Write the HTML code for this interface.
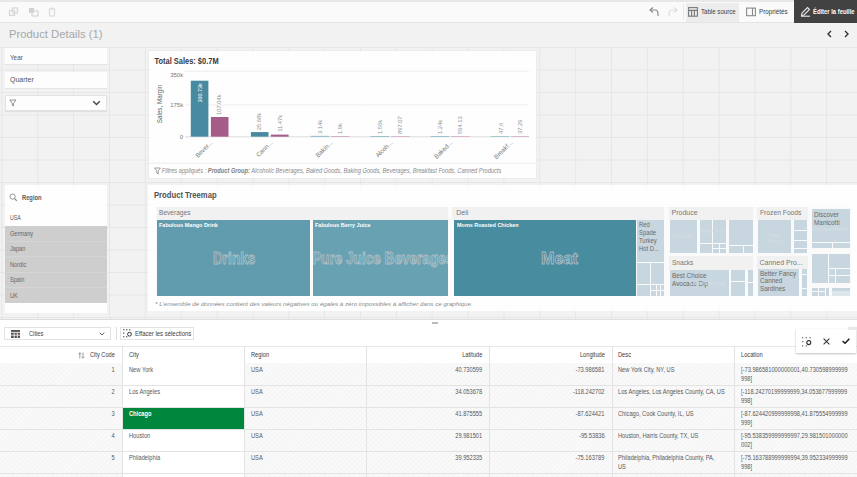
<!DOCTYPE html>
<html><head><meta charset="utf-8">
<style>
*{box-sizing:border-box;margin:0;padding:0}
html,body{width:857px;height:477px;overflow:hidden}
body{position:relative;background:#f2f2f2;font-family:"Liberation Sans",sans-serif;color:#595959}
.a{position:absolute}
.t{position:absolute;white-space:nowrap;line-height:1}
.b{font-weight:bold}
#grid{left:0;top:47px;width:857px;height:272px;
 background-image:linear-gradient(to right, #e6e6e6 1px, transparent 1px),linear-gradient(to bottom, #e6e6e6 1px, transparent 1px);
 background-size:35.87px 22.5px;background-position:1.4px 0px}
.panel{position:absolute;background:rgba(255,255,255,0.88)}
.fp{position:absolute;background:rgba(255,255,255,0.85);box-shadow:0 1px 0 #e3e3e3}
.tm{position:absolute}
.tc{position:absolute;background:#c8d6df}
.tl{position:absolute;background:#c6d5de;border:1px solid #dbe4ea}
</style></head><body>
<!-- top bar -->
<div class="a" style="left:0;top:0;width:857px;height:2px;background:#e8e8e8"></div>
<div class="a" style="left:0;top:2px;width:857px;height:21px;background:#fafafa;border-bottom:1px solid #e4e4e4"></div>
<svg class="a" style="left:8px;top:7px" width="52" height="10" viewBox="0 0 52 10">
 <g fill="none" stroke="#d6d6d6" stroke-width="1.2">
  <rect x="1.5" y="3.5" width="5" height="5"/><rect x="4.5" y="1" width="5" height="5"/>
 </g>
 <rect x="21" y="1" width="5" height="5" fill="#d0d0d0"/><rect x="24" y="4" width="6" height="5" fill="none" stroke="#d6d6d6" stroke-width="1.2"/>
 <rect x="41.5" y="2" width="5" height="7" fill="none" stroke="#dcdcdc" stroke-width="1.2"/><rect x="43" y="0.5" width="2" height="2" fill="#dcdcdc"/>
</svg>
<svg class="a" style="left:648px;top:6px" width="32" height="12" viewBox="0 0 32 12">
 <path d="M3 4 H7 Q10 4 10 8 V10" fill="none" stroke="#8a8a8a" stroke-width="1.2"/><path d="M5 1.5 L2 4 L5 6.5" fill="none" stroke="#8a8a8a" stroke-width="1.2"/>
 <path d="M28 4 H24 Q21 4 21 8 V10" fill="none" stroke="#dedede" stroke-width="1.2"/><path d="M26 1.5 L29 4 L26 6.5" fill="none" stroke="#dedede" stroke-width="1.2"/>
</svg>
<div class="a" style="left:683px;top:4px;width:1px;height:16px;background:#e6e6e6"></div>
<div class="a" style="left:686px;top:3px;width:53px;height:19px;background:#ececec"></div>
<svg class="a" style="left:688px;top:7px" width="10" height="10" viewBox="0 0 10 10"><g fill="none" stroke="#7a7a7a" stroke-width="1.1"><rect x="0.6" y="0.6" width="8.8" height="8.6"/><path d="M0.6 3.4H9.4M3.6 3.4V9.2M6.4 3.4V9.2"/></g></svg>
<div class="t" style="left:701px;top:8px;font-size:7px;color:#404040;transform:scaleX(0.874);transform-origin:0 0">Table source</div>
<svg class="a" style="left:746px;top:7px" width="10" height="10" viewBox="0 0 10 10"><g fill="none" stroke="#8a8a8a" stroke-width="1.1"><rect x="0.6" y="1.1" width="8.8" height="7.6"/><path d="M6.5 1.1V8.7"/></g></svg>
<div class="t" style="left:759.4px;top:8px;font-size:7px;color:#404040;transform:scaleX(0.896);transform-origin:0 0">Propriétés</div>
<div class="a" style="left:794px;top:0;width:63px;height:23px;background:#424242"></div>
<svg class="a" style="left:800px;top:6px" width="11" height="11" viewBox="0 0 11 11"><g fill="none" stroke="#e8e8e8" stroke-width="1.1"><path d="M1.5 9.5 L2 7 L7.5 1.5 L9.5 3.5 L4 9 Z"/><path d="M1 10.2H10"/></g></svg>
<div class="t b" style="left:813px;top:8px;font-size:7px;color:#fff;transform:scaleX(0.835);transform-origin:0 0">Éditer la feuille</div>

<div class="t" style="left:9px;top:29px;font-size:11.3px;color:#a8a8a8">Product Details (1)</div>
<svg class="a" style="left:826px;top:30px" width="26" height="8" viewBox="0 0 26 8"><g fill="none" stroke="#333" stroke-width="1.4"><path d="M5 1 L2 4 L5 7"/><path d="M19 1 L22 4 L19 7"/></g></svg>

<div class="a" id="grid"></div>

<!-- filter panes -->
<div class="fp" style="left:5px;top:48px;width:102px;height:16px"></div>
<div class="t" style="left:9.6px;top:53.5px;font-size:7px;color:#555;transform:scaleX(0.9);transform-origin:0 0">Year</div>
<div class="fp" style="left:5px;top:72px;width:102px;height:16px"></div>
<div class="t" style="left:10px;top:76px;font-size:7px;color:#555">Quarter</div>
<div class="fp" style="left:5px;top:95px;width:102px;height:16px;border:1px solid #e2e2e2;box-shadow:0 1px 1px #e0e0e0"></div>
<svg class="a" style="left:9px;top:99px" width="8" height="8" viewBox="0 0 8 8"><path d="M0.8 1 H7 L4.6 4.2 V7 L3.2 6.3 V4.2 Z" fill="none" stroke="#888" stroke-width="0.9"/></svg>
<svg class="a" style="left:92px;top:100px" width="9" height="6" viewBox="0 0 9 6"><path d="M1.2 1.2 L4.5 4.5 L7.8 1.2" fill="none" stroke="#444" stroke-width="1.4"/></svg>

<!-- CHART -->
<div class="panel" style="left:148px;top:50px;width:389px;height:129px;border:1px solid #ececec"></div>
<svg class="a" style="left:148px;top:50px" width="389" height="129" viewBox="148 50 389 129" font-family="Liberation Sans, sans-serif">
 <text x="154.5" y="64" font-size="8.6" font-weight="bold" fill="#383838" textLength="64.1" lengthAdjust="spacingAndGlyphs">Total Sales: $0.7M</text>
 <g stroke="#ebebeb" stroke-width="0.8"><path d="M185 71.3H529M185 104.8H529"/></g>
 <path d="M185 136.8H529" stroke="#d9d9d9" stroke-width="0.9"/>
 <g font-size="6" fill="#777" text-anchor="end"><text x="183.2" y="76.8">350k</text><text x="183.2" y="107.4">175k</text><text x="183.2" y="139.2">0</text></g>
 <text transform="translate(161.8,104) rotate(-90)" font-size="6.3" fill="#666" text-anchor="middle">Sales, Margin</text>
 <g fill="#488aa0">
  <rect x="190.8" y="80.7" width="17.6" height="56"/>
  <rect x="250.9" y="132.1" width="17.6" height="4.6"/>
 </g>
 <g fill="#a65c89">
  <rect x="210.9" y="117" width="17.6" height="19.7"/>
  <rect x="270.8" y="134.6" width="17.8" height="2.1"/>
 </g>
 <g fill="#9cc3cf"><rect x="310.6" y="135.8" width="18.6" height="1.2"/><rect x="370.6" y="136" width="18.6" height="1"/><rect x="430.6" y="136" width="18.6" height="1"/><rect x="490.6" y="136.2" width="18.6" height="0.8"/></g>
 <g fill="#d6b0c6"><rect x="331" y="136" width="18.6" height="1"/><rect x="391" y="136.2" width="18.6" height="0.8"/><rect x="451" y="136.2" width="18.6" height="0.8"/><rect x="511" y="136.2" width="18" height="0.8"/></g>
 <g font-size="5.8" fill="#8f8f8f">
  <text transform="translate(201.5,83.2) rotate(-90)" text-anchor="end" fill="#fff" font-size="5.4">300.73k</text>
  <text transform="translate(221.3,115) rotate(-90)">107.04k</text>
  <text transform="translate(261.3,130.2) rotate(-90)">25.68k</text>
  <text transform="translate(282,131.8) rotate(-90)">11.47k</text>
  <text transform="translate(322,134) rotate(-90)">3.14k</text>
  <text transform="translate(342,134) rotate(-90)">1.9k</text>
  <text transform="translate(382,134) rotate(-90)">1.56k</text>
  <text transform="translate(402,134) rotate(-90)">897.07</text>
  <text transform="translate(442,134) rotate(-90)">1.24k</text>
  <text transform="translate(462,134) rotate(-90)">594.13</text>
  <text transform="translate(502.5,134) rotate(-90)">47.6</text>
  <text transform="translate(522,134) rotate(-90)">37.29</text>
 </g>
 <g font-size="6.3" fill="#7a7a7a" text-anchor="end">
  <text transform="translate(213,143) rotate(-45)">Bever...</text>
  <text transform="translate(273,143) rotate(-45)">Cann...</text>
  <text transform="translate(333,143) rotate(-45)">Bakin...</text>
  <text transform="translate(393,143) rotate(-45)">Alcoh...</text>
  <text transform="translate(453,143) rotate(-45)">Baked...</text>
  <text transform="translate(513,143) rotate(-45)">Breakf...</text>
 </g>
 <path d="M149 163.2H536" stroke="#e6e6e6" stroke-width="0.8"/>
 <path d="M154.6 168 H160.4 L158.2 171 V174 L156.8 173.2 V171 Z" fill="none" stroke="#8a8a8a" stroke-width="0.8"/>
 <text x="161.7" y="173.3" font-size="6.4" font-style="italic" fill="#8a8a8a" textLength="339.6" lengthAdjust="spacingAndGlyphs">Filtres appliqués : <tspan font-weight="bold" fill="#808080">Product Group:</tspan> Alcoholic Beverages, Baked Goods, Baking Goods, Beverages, Breakfast Foods, Canned Products</text>
</svg>

<!-- REGION LISTBOX -->
<div class="panel" style="left:5px;top:185px;width:102px;height:128px"></div>
<svg class="a" style="left:9px;top:193px" width="9" height="9" viewBox="0 0 9 9"><circle cx="3.6" cy="3.6" r="2.6" fill="none" stroke="#8a8a8a" stroke-width="0.9"/><path d="M5.5 5.5 L7.8 7.8" stroke="#8a8a8a" stroke-width="1.1"/></svg>
<div class="t b" style="left:22px;top:194px;font-size:7px;color:#595959;transform:scaleX(0.823);transform-origin:0 0">Region</div>
<div class="t" style="left:10px;top:215px;font-size:6.6px;color:#595959;transform:scaleX(0.8);transform-origin:0 0">USA</div>
<div class="a" style="left:5px;top:225.5px;width:102px;height:77.5px;background:#cecece"></div>
<div class="a" style="left:5px;top:240.7px;width:102px;height:0.8px;background:#d5d5d5"></div>
<div class="a" style="left:5px;top:256.2px;width:102px;height:0.8px;background:#d5d5d5"></div>
<div class="a" style="left:5px;top:271.7px;width:102px;height:0.8px;background:#d5d5d5"></div>
<div class="a" style="left:5px;top:287.2px;width:102px;height:0.8px;background:#d5d5d5"></div>
<div class="t" style="left:10px;top:230.8px;font-size:6.6px;color:#666;transform:scaleX(0.85);transform-origin:0 0">Germany</div>
<div class="t" style="left:10px;top:246.3px;font-size:6.6px;color:#666;transform:scaleX(0.85);transform-origin:0 0">Japan</div>
<div class="t" style="left:10px;top:261.8px;font-size:6.6px;color:#666;transform:scaleX(0.85);transform-origin:0 0">Nordic</div>
<div class="t" style="left:10px;top:277.3px;font-size:6.6px;color:#666;transform:scaleX(0.85);transform-origin:0 0">Spain</div>
<div class="t" style="left:10px;top:292.8px;font-size:6.6px;color:#666;transform:scaleX(0.85);transform-origin:0 0">UK</div>

<!-- TREEMAP -->
<div class="panel" style="left:148px;top:184.7px;width:709px;height:126.3px"></div>
<div class="t b" style="left:154.3px;top:191px;font-size:8.6px;color:#505050;transform:scaleX(0.892);transform-origin:0 0">Product Treemap</div>
<!-- treemap bg band -->
<div class="a" style="left:156px;top:207px;width:695px;height:89.3px;background:#fafafa"></div>
<div class="a" style="left:156.6px;top:207.2px;width:291.8px;height:12.5px;background:#f1f1f1"></div><div class="a" style="left:452px;top:207.2px;width:212px;height:12.5px;background:#f1f1f1"></div><div class="a" style="left:668.5px;top:207.2px;width:84.5px;height:12.7px;background:#f1f1f1"></div><div class="a" style="left:668.5px;top:256px;width:84.5px;height:14.2px;background:#f1f1f1"></div><div class="a" style="left:756.5px;top:207.2px;width:51.5px;height:12.7px;background:#f1f1f1"></div><div class="a" style="left:756.5px;top:255.5px;width:51.5px;height:13.3px;background:#f1f1f1"></div>
<div class="a" style="left:448.6px;top:207px;width:3.6px;height:89.3px;background:#fbfbfb"></div><div class="a" style="left:309.6px;top:219.7px;width:3.4px;height:76.6px;background:#fbfbfb"></div><div class="a" style="left:448.4px;top:219.7px;width:5.6px;height:76.6px;background:#fbfbfb"></div><div class="a" style="left:635.6px;top:219.7px;width:1.7px;height:76.6px;background:#f8f8f8"></div>
<!-- Beverages -->
<div class="t" style="left:159px;top:209px;font-size:7px;color:#777;transform:scaleX(0.94);transform-origin:0 0">Beverages</div>
<div class="tm" style="left:157px;top:219.7px;width:152.6px;height:76.6px;background:#609cad"></div>
<div class="tm" style="left:313px;top:219.7px;width:135.4px;height:76.6px;background:#68a1b1"></div>
<div class="t b" style="left:159.3px;top:221.5px;font-size:6.2px;color:#fff;transform:scaleX(0.883);transform-origin:0 0">Fabulous Mango Drink</div>
<div class="t b" style="left:315px;top:221.5px;font-size:6.2px;color:#fff;transform:scaleX(0.883);transform-origin:0 0">Fabulous Berry Juice</div>
<!-- Deli -->
<div class="t" style="left:456.3px;top:209px;font-size:7px;color:#777">Deli</div>
<div class="tm" style="left:454px;top:219.7px;width:181.6px;height:76.6px;background:#488ca0"></div>
<div class="t b" style="left:456.5px;top:221.5px;font-size:6.2px;color:#fff;transform:scaleX(0.883);transform-origin:0 0">Moms Roasted Chicken</div>
<div class="tc" style="left:637.3px;top:219.9px;width:26.7px;height:41.9px"></div>
<div class="t" style="left:639px;top:220.8px;font-size:6.4px;color:#6a6a6a;line-height:7.9px;transform:scaleX(0.92);transform-origin:0 0">Red<br>Spade<br>Turkey<br>Hot D...</div>
<!-- Deli right col bottom -->
<div class="tc" style="left:637.3px;top:262.6px;width:13px;height:21.8px"></div>
<div class="tc" style="left:651.3px;top:262.6px;width:12.7px;height:21.8px"></div>
<div class="tc" style="left:637.3px;top:285.2px;width:13px;height:11.1px"></div>
<div class="tc" style="left:651.3px;top:285.2px;width:5px;height:5px"></div><div class="tc" style="left:657px;top:285.2px;width:3px;height:5px"></div><div class="tc" style="left:660.6px;top:285.2px;width:3.4px;height:5px"></div>
<div class="tc" style="left:651.3px;top:291px;width:5px;height:5.3px"></div><div class="tc" style="left:657px;top:291px;width:3px;height:5.3px"></div><div class="tc" style="left:660.6px;top:291px;width:3.4px;height:5.3px"></div>
<!-- Produce -->
<div class="t" style="left:671.5px;top:209px;font-size:7px;color:#777">Produce</div>
<div class="tc" style="left:670px;top:220px;width:26.5px;height:32.6px"></div>
<div class="tc" style="left:699.6px;top:220px;width:12.4px;height:23.2px"></div>
<div class="tc" style="left:712.8px;top:220px;width:13px;height:23.2px"></div>
<div class="tc" style="left:699.6px;top:244px;width:12.4px;height:8.6px"></div>
<div class="tc" style="left:712.8px;top:244px;width:6px;height:4px"></div><div class="tc" style="left:719.6px;top:244px;width:6.2px;height:4px"></div>
<div class="tc" style="left:712.8px;top:248.7px;width:6px;height:3.9px"></div><div class="tc" style="left:719.6px;top:248.7px;width:6.2px;height:3.9px"></div>
<div class="tc" style="left:728.8px;top:220px;width:24px;height:25.2px"></div>
<div class="tc" style="left:728.8px;top:246px;width:14px;height:6.6px"></div><div class="tc" style="left:743.6px;top:246px;width:9.2px;height:6.6px"></div>
<div class="t" style="left:672px;top:234px;font-size:5px;color:#d5dfe5">Vegetable</div>
<div class="t" style="left:701px;top:229px;font-size:5px;color:#d5dfe5">Fresh Fruit</div>
<!-- Snacks -->
<div class="t" style="left:671.5px;top:259px;font-size:7px;color:#777;transform:scaleX(0.93);transform-origin:0 0">Snacks</div>
<div class="tc" style="left:670px;top:270.2px;width:58.8px;height:26px"></div>
<div class="t" style="left:672px;top:271.5px;font-size:6.4px;color:#6a6a6a;line-height:8px">Best Choice<br>Avocado Dip</div>
<div class="t" style="left:690px;top:280px;font-size:6px;color:#d5dfe5">Dips/Spreads</div>
<div class="tc" style="left:730.6px;top:270.2px;width:14.8px;height:11px"></div>
<div class="tc" style="left:730.6px;top:282px;width:14.8px;height:14.2px"></div>
<div class="tc" style="left:748.4px;top:270.2px;width:4.5px;height:12px"></div>
<div class="tc" style="left:748.4px;top:283px;width:4.5px;height:13.2px"></div>
<!-- Frozen Foods -->
<div class="t" style="left:759.5px;top:209px;font-size:7px;color:#777;transform:scaleX(0.96);transform-origin:0 0">Frozen Foods</div>
<div class="tc" style="left:758px;top:220px;width:32.5px;height:32.8px"></div>
<div class="t" style="left:766px;top:232px;font-size:5px;color:#d5dfe5;line-height:6px;text-align:center">Meat<br>Dinners</div>
<div class="tc" style="left:793.8px;top:220px;width:13px;height:10px"></div>
<div class="tc" style="left:793.8px;top:231px;width:13px;height:9px"></div>
<div class="tc" style="left:793.8px;top:240.8px;width:13px;height:7.6px"></div>
<div class="tc" style="left:793.8px;top:249.3px;width:13px;height:3.5px"></div>
<!-- Canned -->
<div class="t" style="left:759.5px;top:258.5px;font-size:7px;color:#777">Canned Pro...</div>
<div class="tc" style="left:758px;top:268.8px;width:41.2px;height:27px"></div>
<div class="t" style="left:760px;top:269.5px;font-size:6.4px;color:#6a6a6a;line-height:7.5px">Better Fancy<br>Canned<br>Sardines</div>
<div class="tc" style="left:801.8px;top:268.8px;width:5px;height:5px"></div>
<div class="tc" style="left:801.8px;top:274.5px;width:5px;height:6px"></div>
<div class="tc" style="left:801.8px;top:281.3px;width:5px;height:7px"></div>
<div class="tc" style="left:801.8px;top:289px;width:5px;height:6.6px"></div>
<!-- Right group -->
<div class="tc" style="left:811.8px;top:209px;width:37.8px;height:33.2px"></div>
<div class="t" style="left:814px;top:210.5px;font-size:6.4px;color:#6a6a6a;line-height:8px">Discover<br>Manicotti</div>
<div class="t" style="left:814px;top:226.5px;font-size:5.6px;color:#d5dfe5">Frozen Pasta</div>
<div class="tc" style="left:811.8px;top:243px;width:20px;height:4.8px"></div><div class="tc" style="left:832.6px;top:243px;width:8px;height:4.8px"></div><div class="tc" style="left:841.4px;top:243px;width:8.2px;height:4.8px"></div>
<div class="tc" style="left:811.8px;top:253.8px;width:16.5px;height:29px"></div>
<div class="tc" style="left:829px;top:253.8px;width:9.5px;height:14px"></div><div class="tc" style="left:839.2px;top:253.8px;width:10.4px;height:14px"></div>
<div class="tc" style="left:829px;top:268.6px;width:6px;height:6.6px"></div><div class="tc" style="left:835.6px;top:268.6px;width:6px;height:6.6px"></div><div class="tc" style="left:842.4px;top:268.6px;width:7.2px;height:6.6px"></div>
<div class="tc" style="left:829px;top:276px;width:6px;height:6.8px"></div><div class="tc" style="left:835.6px;top:276px;width:6px;height:6.8px"></div><div class="tc" style="left:842.4px;top:276px;width:7.2px;height:6.8px"></div>
<div class="tc" style="left:811.8px;top:287.6px;width:6px;height:3.6px"></div><div class="tc" style="left:818.6px;top:287.6px;width:6px;height:3.6px"></div>
<div class="tc" style="left:811.8px;top:292px;width:6px;height:3.8px"></div><div class="tc" style="left:818.6px;top:292px;width:6px;height:3.8px"></div>
<div class="tc" style="left:826px;top:287.6px;width:3px;height:8.2px"></div>
<div class="tc" style="left:832px;top:287.6px;width:17.6px;height:3px"></div>
<div class="tc" style="left:832px;top:291.4px;width:17.6px;height:4.4px;background:#dde6eb"></div>
<!-- outlined big labels -->
<div class="t b" style="left:212.6px;top:250px;font-size:17px;color:#609cad;-webkit-text-stroke:0.9px #aebfc6;transform:scaleX(0.80);transform-origin:0 0">Drinks</div>
<div class="a" style="left:313px;top:248px;width:135.4px;height:22px;overflow:hidden"><div class="t b" style="left:-1px;top:2px;font-size:17px;color:#68a1b1;-webkit-text-stroke:0.9px #aebfc6;transform:scaleX(0.80);transform-origin:0 0">Pure Juice Beverages</div></div>
<div class="t b" style="left:540.8px;top:250px;font-size:17px;color:#488ca0;-webkit-text-stroke:0.9px #a6b9c1;transform:scaleX(0.95);transform-origin:0 0">Meat</div>
<div class="t" style="left:155px;top:301px;font-size:6.2px;font-style:italic;color:#8a8a8a">* L'ensemble de données contient des valeurs négatives ou égales à zéro impossibles à afficher dans ce graphique.</div>

<!-- TABLE PANEL -->
<div class="a" style="left:0;top:318.6px;width:857px;height:159px;background:#fff;border-top:1px solid #dedede"></div>
<div class="a" style="left:432px;top:321.5px;width:6px;height:0.8px;background:#bbb"></div>
<div class="a" style="left:432px;top:323.3px;width:6px;height:0.8px;background:#bbb"></div>
<div class="a" style="left:4px;top:327px;width:107px;height:13px;border:1px solid #e3e3e3;background:#fff"></div>
<svg class="a" style="left:10.5px;top:329.5px" width="9.5" height="8" viewBox="0 0 9.5 8"><rect x="0" y="0" width="9.5" height="8" fill="#555"/><g stroke="#fff" stroke-width="0.8"><path d="M0 2.4H9.5M0 5.2H9.5M3.2 2.4V8M6.3 2.4V8"/></g></svg>
<div class="t" style="left:28.5px;top:331px;font-size:6.6px;transform:scaleX(0.865);transform-origin:0 0;color:#404040">Cities</div>
<svg class="a" style="left:98.5px;top:331.5px" width="6" height="4" viewBox="0 0 6 4"><path d="M0.6 0.6 L3 3 L5.4 0.6" fill="none" stroke="#555" stroke-width="0.9"/></svg>
<div class="a" style="left:116px;top:327px;width:0.8px;height:13px;background:#e0e0e0"></div>
<div class="a" style="left:120px;top:327px;width:74px;height:13px;border:1px solid #e3e3e3;background:#fff"></div>
<svg class="a" style="left:123px;top:329px" width="10" height="9" viewBox="0 0 10 9"><g fill="#777"><rect x="0" y="0" width="1.4" height="1.4"/><rect x="3" y="0" width="1.4" height="1.4"/><rect x="6" y="0" width="1.4" height="1.4"/><rect x="0" y="3.5" width="1.4" height="1.4"/><rect x="0" y="7" width="1.4" height="1.4"/><rect x="3" y="7" width="1.4" height="1.4"/></g><circle cx="6.5" cy="5.2" r="1.9" fill="none" stroke="#333" stroke-width="1"/></svg>
<div class="t" style="left:135px;top:331px;font-size:6.6px;transform:scaleX(0.905);transform-origin:0 0;color:#404040">Effacer les sélections</div>

<!-- table header -->
<div class="a" style="left:0;top:345.6px;width:857px;height:18px;background:#fff;border-top:1px solid #e8e8e8;border-bottom:1.6px solid #c9c9c9"></div>
<!-- rows bg hatched -->
<div class="a" style="left:0;top:363.3px;width:857px;height:114px;background:#f6f6f6;background-image:repeating-linear-gradient(-45deg, rgba(255,255,255,0.4) 0 1.5px, transparent 1.5px 3.5px)"></div>
<div class="a" style="left:122px;top:363.3px;width:122px;height:114px;background:#fff"></div>
<div class="a" style="left:122px;top:407.4px;width:122px;height:21.6px;background:#00873d"></div>
<!-- row lines -->
<div class="a" style="left:0;top:385px;width:857px;height:0.8px;background:#e3e3e3"></div>
<div class="a" style="left:0;top:407px;width:857px;height:0.8px;background:#e3e3e3"></div>
<div class="a" style="left:0;top:429px;width:857px;height:0.8px;background:#e3e3e3"></div>
<div class="a" style="left:0;top:451px;width:857px;height:0.8px;background:#e3e3e3"></div>
<div class="a" style="left:0;top:473px;width:857px;height:0.8px;background:#e3e3e3"></div>
<!-- col lines -->
<div class="a" style="left:121.5px;top:346px;width:0.8px;height:131px;background:#e3e3e3"></div>
<div class="a" style="left:243.8px;top:346px;width:0.8px;height:131px;background:#e3e3e3"></div>
<div class="a" style="left:366px;top:346px;width:0.8px;height:131px;background:#e3e3e3"></div>
<div class="a" style="left:489px;top:346px;width:0.8px;height:131px;background:#e3e3e3"></div>
<div class="a" style="left:611.5px;top:346px;width:0.8px;height:131px;background:#e3e3e3"></div>
<div class="a" style="left:734px;top:346px;width:0.8px;height:131px;background:#e3e3e3"></div>
<svg class="a" style="left:77.5px;top:351.5px" width="7" height="7" viewBox="0 0 7 7"><g fill="none" stroke="#888" stroke-width="0.8"><path d="M1.8 6.5V0.8M0.3 2.2L1.8 0.7L3.3 2.2"/><path d="M5 0.6V6.2M3.6 4.8L5 6.2L6.4 4.8"/></g></svg>
<div class="t" style="right:742.4px;top:351.6px;font-size:6.6px;transform:scaleX(0.865);transform-origin:100% 0;color:#404040">City Code</div>
<div class="t" style="left:129.0px;top:351.6px;font-size:6.6px;transform:scaleX(0.865);transform-origin:0 0;color:#404040">City</div>
<div class="t" style="left:251.0px;top:351.6px;font-size:6.6px;transform:scaleX(0.865);transform-origin:0 0;color:#404040">Region</div>
<div class="t" style="right:375.0px;top:351.6px;font-size:6.6px;transform:scaleX(0.865);transform-origin:100% 0;color:#404040">Latitude</div>
<div class="t" style="right:252.2px;top:351.6px;font-size:6.6px;transform:scaleX(0.865);transform-origin:100% 0;color:#404040">Longitude</div>
<div class="t" style="left:618.2px;top:351.6px;font-size:6.6px;transform:scaleX(0.865);transform-origin:0 0;color:#404040">Desc</div>
<div class="t" style="left:740.7px;top:351.6px;font-size:6.6px;transform:scaleX(0.865);transform-origin:0 0;color:#404040">Location</div>
<div class="t" style="right:742.0px;top:367.3px;font-size:6.6px;transform:scaleX(0.865);transform-origin:100% 0;color:#595959">1</div>
<div class="t" style="left:129.0px;top:367.3px;font-size:6.6px;transform:scaleX(0.865);transform-origin:0 0;color:#595959">New York</div>
<div class="t" style="left:251.0px;top:367.3px;font-size:6.6px;transform:scaleX(0.865);transform-origin:0 0;color:#595959">USA</div>
<div class="t" style="right:375.0px;top:367.3px;font-size:6.6px;transform:scaleX(0.865);transform-origin:100% 0;color:#595959">40.730599</div>
<div class="t" style="right:252.2px;top:367.3px;font-size:6.6px;transform:scaleX(0.865);transform-origin:100% 0;color:#595959">-73.986581</div>
<div class="t" style="left:618.2px;top:367.3px;font-size:6.6px;transform:scaleX(0.865);transform-origin:0 0;color:#595959">New York City, NY, US</div>
<div class="t" style="left:740.7px;top:367.3px;font-size:6.6px;transform:scaleX(0.865);transform-origin:0 0;color:#595959">[-73.986581000000001,40.730598999999</div>
<div class="t" style="left:740.7px;top:376.1px;font-size:6.6px;transform:scaleX(0.865);transform-origin:0 0;color:#595959">998]</div>
<div class="t" style="right:742.0px;top:389.3px;font-size:6.6px;transform:scaleX(0.865);transform-origin:100% 0;color:#595959">2</div>
<div class="t" style="left:129.0px;top:389.3px;font-size:6.6px;transform:scaleX(0.865);transform-origin:0 0;color:#595959">Los Angeles</div>
<div class="t" style="left:251.0px;top:389.3px;font-size:6.6px;transform:scaleX(0.865);transform-origin:0 0;color:#595959">USA</div>
<div class="t" style="right:375.0px;top:389.3px;font-size:6.6px;transform:scaleX(0.865);transform-origin:100% 0;color:#595959">34.053678</div>
<div class="t" style="right:252.2px;top:389.3px;font-size:6.6px;transform:scaleX(0.865);transform-origin:100% 0;color:#595959">-118.242702</div>
<div class="t" style="left:618.2px;top:389.3px;font-size:6.6px;transform:scaleX(0.865);transform-origin:0 0;color:#595959">Los Angeles, Los Angeles County, CA, US</div>
<div class="t" style="left:740.7px;top:389.3px;font-size:6.6px;transform:scaleX(0.865);transform-origin:0 0;color:#595959">[-118.24270199999999,34.053677999999</div>
<div class="t" style="left:740.7px;top:398.1px;font-size:6.6px;transform:scaleX(0.865);transform-origin:0 0;color:#595959">998]</div>
<div class="t" style="right:742.0px;top:411.3px;font-size:6.6px;transform:scaleX(0.865);transform-origin:100% 0;color:#595959">3</div>
<div class="t" style="left:129.0px;top:411.3px;font-size:6.6px;transform:scaleX(0.865);transform-origin:0 0;color:#fff;font-weight:bold">Chicago</div>
<div class="t" style="left:251.0px;top:411.3px;font-size:6.6px;transform:scaleX(0.865);transform-origin:0 0;color:#595959">USA</div>
<div class="t" style="right:375.0px;top:411.3px;font-size:6.6px;transform:scaleX(0.865);transform-origin:100% 0;color:#595959">41.875555</div>
<div class="t" style="right:252.2px;top:411.3px;font-size:6.6px;transform:scaleX(0.865);transform-origin:100% 0;color:#595959">-87.624421</div>
<div class="t" style="left:618.2px;top:411.3px;font-size:6.6px;transform:scaleX(0.865);transform-origin:0 0;color:#595959">Chicago, Cook County, IL, US</div>
<div class="t" style="left:740.7px;top:411.3px;font-size:6.6px;transform:scaleX(0.865);transform-origin:0 0;color:#595959">[-87.624420999999998,41.875554999999</div>
<div class="t" style="left:740.7px;top:420.1px;font-size:6.6px;transform:scaleX(0.865);transform-origin:0 0;color:#595959">999]</div>
<div class="t" style="right:742.0px;top:433.3px;font-size:6.6px;transform:scaleX(0.865);transform-origin:100% 0;color:#595959">4</div>
<div class="t" style="left:129.0px;top:433.3px;font-size:6.6px;transform:scaleX(0.865);transform-origin:0 0;color:#595959">Houston</div>
<div class="t" style="left:251.0px;top:433.3px;font-size:6.6px;transform:scaleX(0.865);transform-origin:0 0;color:#595959">USA</div>
<div class="t" style="right:375.0px;top:433.3px;font-size:6.6px;transform:scaleX(0.865);transform-origin:100% 0;color:#595959">29.981501</div>
<div class="t" style="right:252.2px;top:433.3px;font-size:6.6px;transform:scaleX(0.865);transform-origin:100% 0;color:#595959">-95.53836</div>
<div class="t" style="left:618.2px;top:433.3px;font-size:6.6px;transform:scaleX(0.865);transform-origin:0 0;color:#595959">Houston, Harris County, TX, US</div>
<div class="t" style="left:740.7px;top:433.3px;font-size:6.6px;transform:scaleX(0.865);transform-origin:0 0;color:#595959">[-95.538359999999997,29.981501000000</div>
<div class="t" style="left:740.7px;top:442.1px;font-size:6.6px;transform:scaleX(0.865);transform-origin:0 0;color:#595959">002]</div>
<div class="t" style="right:742.0px;top:455.3px;font-size:6.6px;transform:scaleX(0.865);transform-origin:100% 0;color:#595959">5</div>
<div class="t" style="left:129.0px;top:455.3px;font-size:6.6px;transform:scaleX(0.865);transform-origin:0 0;color:#595959">Philadelphia</div>
<div class="t" style="left:251.0px;top:455.3px;font-size:6.6px;transform:scaleX(0.865);transform-origin:0 0;color:#595959">USA</div>
<div class="t" style="right:375.0px;top:455.3px;font-size:6.6px;transform:scaleX(0.865);transform-origin:100% 0;color:#595959">39.952335</div>
<div class="t" style="right:252.2px;top:455.3px;font-size:6.6px;transform:scaleX(0.865);transform-origin:100% 0;color:#595959">-75.163789</div>
<div class="t" style="left:618.2px;top:455.3px;font-size:6.6px;transform:scaleX(0.865);transform-origin:0 0;color:#595959">Philadelphia, Philadelphia County, PA,</div>
<div class="t" style="left:618.2px;top:464.1px;font-size:6.6px;transform:scaleX(0.865);transform-origin:0 0;color:#595959">US</div>
<div class="t" style="left:740.7px;top:455.3px;font-size:6.6px;transform:scaleX(0.865);transform-origin:0 0;color:#595959">[-75.163788999999994,39.952334999999</div>
<div class="t" style="left:740.7px;top:464.1px;font-size:6.6px;transform:scaleX(0.865);transform-origin:0 0;color:#595959">998]</div>
<div class="a" style="left:795.6px;top:329px;width:60.6px;height:24.2px;background:#fff;box-shadow:0 1px 2px rgba(0,0,0,0.25)"></div>
<svg class="a" style="left:801.5px;top:337px" width="10" height="10" viewBox="0 0 10 10"><g fill="#777"><rect x="0" y="0" width="1.3" height="1.3"/><rect x="3.6" y="0" width="1.3" height="1.3"/><rect x="7.4" y="0" width="1.3" height="1.3"/><rect x="0" y="4" width="1.3" height="1.3"/><rect x="0" y="8.2" width="1.3" height="1.3"/><rect x="3.6" y="8.2" width="1.3" height="1.3"/></g><circle cx="6.8" cy="5.6" r="2" fill="none" stroke="#333" stroke-width="1.1"/></svg>
<svg class="a" style="left:822.5px;top:337.5px" width="7" height="7" viewBox="0 0 7 7"><path d="M0.6 0.6L6.4 6.4M6.4 0.6L0.6 6.4" stroke="#333" stroke-width="1.1"/></svg>
<svg class="a" style="left:841.5px;top:338px" width="8" height="6" viewBox="0 0 8 6"><path d="M0.6 3L3 5.3L7.4 0.8" fill="none" stroke="#222" stroke-width="1.5"/></svg>
<div class="a" style="left:847.5px;top:327.2px;width:9.5px;height:3px;background:#e8e8e8"></div>
</body></html>
